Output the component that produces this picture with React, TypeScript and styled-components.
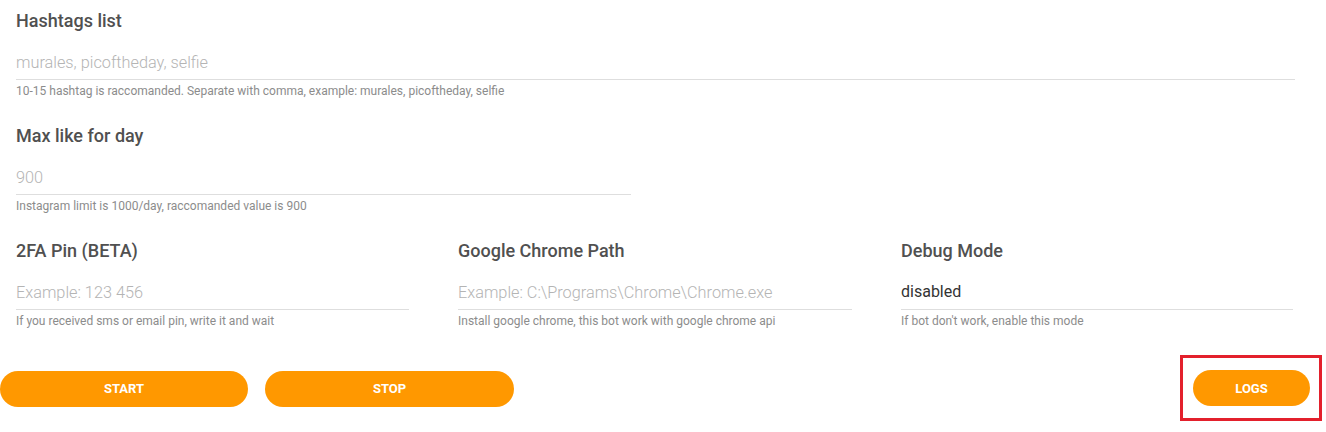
import React from "react";
import styled, { createGlobalStyle } from "styled-components";

const Global = createGlobalStyle`
  html, body { margin: 0; padding: 0; background: #fff; }
  body { font-family: Roboto, "Noto Sans", Arial, sans-serif; }
  * { box-sizing: border-box; }
`;

const Page = styled.div`
  width: 1326px;
  padding-top: 10px;
`;

const FullRow = styled.div<{ $width: string; $right: number }>`
  width: ${(p) => p.$width};
  padding: 0 ${(p) => p.$right}px 0 16px;
  margin-bottom: 27px;
`;

const Grid = styled.div`
  display: grid;
  grid-template-columns: 442px 443px 441px;
  margin-bottom: 28px;
`;

const Cell = styled.div`
  padding: 0 33px 0 16px;
`;

const Label = styled.div`
  font-size: 18px;
  font-weight: 500;
  line-height: 22px;
  color: #505050;
  margin-bottom: 13px;
`;

const Input = styled.input`
  display: block;
  width: 100%;
  height: 35px;
  border: none;
  border-bottom: 1px solid #dedede;
  padding: 0;
  font-family: Roboto, "Noto Sans", Arial, sans-serif;
  font-size: 16.3px;
  font-weight: 300;
  color: #333;
  outline: none;
  background: transparent;
  &::placeholder {
    color: #b4b4b4;
    font-weight: 300;
  }
`;

const Value = styled.div`
  height: 35px;
  border-bottom: 1px solid #dedede;
  font-size: 16px;
  line-height: 34px;
  color: #333;
`;

const Help = styled.div`
  margin-top: 5px;
  font-size: 12px;
  font-weight: 400;
  line-height: 13px;
  color: #8c8c8c;
`;

const Actions = styled.div`
  display: flex;
  align-items: center;
  padding-right: 4px;
`;

const Button = styled.button<{ $w: number }>`
  width: ${(p) => p.$w}px;
  height: 36px;
  border: none;
  border-radius: 18px;
  background: #ff9800;
  color: #fff;
  font-family: Roboto, "Noto Sans", Arial, sans-serif;
  font-size: 13px;
  font-weight: 700;
  text-transform: uppercase;
  cursor: pointer;
  padding: 0;
`;

const Spacer = styled.div`
  flex: 1;
`;

const Gap = styled.div`
  width: 17px;
`;

const Highlight = styled.div`
  border: 3px solid #e3202c;
  padding: 12px 9px 12px 10px;
  margin-top: -1px;
`;

export default function App() {
  return (
    <Page>
      <Global />
      <FullRow $width="1326px" $right={31}>
        <Label>Hashtags list</Label>
        <Input placeholder="murales, picoftheday, selfie" />
        <Help>10-15 hashtag is raccomanded. Separate with comma, example: murales, picoftheday, selfie</Help>
      </FullRow>
      <FullRow $width="663px" $right={32}>
        <Label>Max like for day</Label>
        <Input placeholder="900" />
        <Help>Instagram limit is 1000/day, raccomanded value is 900</Help>
      </FullRow>
      <Grid>
        <Cell>
          <Label>2FA Pin (BETA)</Label>
          <Input placeholder="Example: 123 456" />
          <Help>If you received sms or email pin, write it and wait</Help>
        </Cell>
        <Cell>
          <Label>Google Chrome Path</Label>
          <Input placeholder="Example: C:\Programs\Chrome\Chrome.exe" />
          <Help>Install google chrome, this bot work with google chrome api</Help>
        </Cell>
        <Cell>
          <Label>Debug Mode</Label>
          <Value>disabled</Value>
          <Help>If bot don't work, enable this mode</Help>
        </Cell>
      </Grid>
      <Actions>
        <Button $w={248}>Start</Button>
        <Gap />
        <Button $w={249}>Stop</Button>
        <Spacer />
        <Highlight>
          <Button $w={117}>Logs</Button>
        </Highlight>
      </Actions>
    </Page>
  );
}
